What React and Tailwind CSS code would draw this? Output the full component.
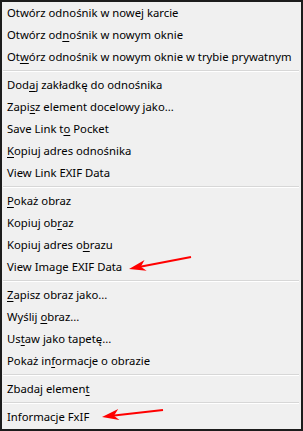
const items = [
  [['Otwórz odnośnik w nowej karcie']],
  [['Otwórz od'], ['n', true], ['ośnik w nowym oknie']],
  [['Ot'], ['w', true], ['órz odnośnik w nowym oknie w trybie prywatnym']],
  'sep',
  [['Dod'], ['a', true], ['j zakładkę do odnośnika']],
  [['Zapi'], ['s', true], ['z element docelowy jako...']],
  [['Save Link t'], ['o', true], [' Pocket']],
  [['K', true], ['opiuj adres odnośnika']],
  [['View Link EXIF Data']],
  'sep',
  [['P', true], ['okaż obraz']],
  [['Kopiuj ob'], ['r', true], ['az']],
  [['Kopiuj adres o'], ['b', true], ['razu']],
  [['View Image EXIF Data']],
  'sep',
  [['Z', true], ['apisz obraz jako...']],
  [['Wyślij '], ['o', true], ['braz...']],
  [['Us'], ['t', true], ['aw jako tapetę...']],
  [['Pokaż in'], ['f', true], ['ormacje o obrazie']],
  'sep',
  [['Zbadaj elemen'], ['t', true]],
  'sep',
  [['Informacje FxIF']],
];

function Arrow({ x1, y1, x2, y2 }) {
  // tail (x1,y1) -> tip (x2,y2)
  const dx = x2 - x1, dy = y2 - y1;
  const len = Math.hypot(dx, dy);
  const ux = dx / len, uy = dy / len;
  const bx = x2 - ux * 17, by = y2 - uy * 17;
  const px = -uy, py = ux;
  const head = `${x2},${y2} ${bx + px * 6},${by + py * 6} ${x2 - ux * 12},${y2 - uy * 12} ${bx - px * 5},${by - py * 5}`;
  return (
    <>
      <line x1={x1} y1={y1} x2={x2 - ux * 10} y2={y2 - uy * 10} stroke="#ff0000" strokeWidth="2" />
      <polygon points={head} fill="#ff0000" />
    </>
  );
}

export default function App() {
  return (
    <div className="relative w-[303px] h-[431px] bg-[#f0f0f0] border-2 border-[#1c1c1c] pb-px text-[11.3px] text-black" style={{ fontFamily: "'Noto Sans', sans-serif" }}>
      {items.map((it, i) =>
        it === 'sep' ? (
          <div key={i} className="h-[6px] flex flex-col justify-center pl-px pr-[2px]">
            <div className="h-px bg-[#d7d7d7]" />
            <div className="h-px bg-white" />
          </div>
        ) : (
          <div key={i} className="h-[22px] flex items-center pl-[5px] whitespace-pre leading-none">
            {it.map(([t, u], j) => (
              <span key={j} className={u ? 'underline underline-offset-2' : ''}>{t}</span>
            ))}
          </div>
        )
      )}
      <svg className="absolute left-0 top-0 pointer-events-none" width="303" height="431" viewBox="0 0 303 431">
        <Arrow x1={189} y1={255} x2={127} y2={267} />
        <Arrow x1={161} y1={408} x2={100} y2={415} />
      </svg>
    </div>
  );
}
